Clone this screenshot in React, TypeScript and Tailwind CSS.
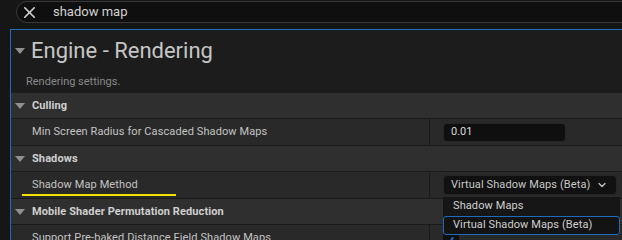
import { ChevronDown, X } from 'lucide-react'

const font = { fontFamily: 'Roboto, "Noto Sans", sans-serif' }

function Caret() {
  return (
    <svg width="10" height="6" viewBox="0 0 10 6" className="shrink-0">
      <path d="M0 0 L10 0 L5 6 Z" fill="#8f8f8f" />
    </svg>
  )
}

function Header({ label }: { label: string }) {
  return (
    <div className="flex h-[26px] items-center gap-[7px] bg-[#2f2f2f] pl-[4px] pt-[1px] border-b border-[#1b1b1b]">
      <Caret />
      <span className="text-[11px] font-bold tracking-[0.1px] text-[#cfcfcf]">{label}</span>
    </div>
  )
}

function Row({ label, children, mark }: { label: string; children?: React.ReactNode; mark?: boolean }) {
  return (
    <div className="flex h-[27px] bg-[#292929] border-b border-[#1b1b1b]">
      <div className="relative flex w-[419px] items-center border-r border-[#1b1b1b] pl-[21px]">
        <span className="whitespace-nowrap text-[11px] tracking-[0.1px] text-[#c4c4c4]">{label}</span>
        {mark && <div className="absolute left-[11px] top-[22px] h-[2px] w-[154px] bg-[#f2e200]" />}
      </div>
      <div className="flex flex-1 items-center pl-[13px]">{children}</div>
    </div>
  )
}

export default function App() {
  return (
    <div className="relative h-[240px] w-[622px] overflow-hidden bg-[#161616]" style={font}>
      <div className="pt-[1px] pl-[16px]">
        <div className="flex h-[22px] w-[700px] items-center rounded-l-full border border-[#383838] bg-[#0f0f0f] pl-[3px]">
          <X size={19} strokeWidth={2} className="text-[#d6d6d6]" />
          <span className="ml-[14px] text-[13px] text-[#d2d2d2]">shadow map</span>
        </div>
      </div>
      <div className="mt-[6px] flex">
        <div className="w-[10px] shrink-0" />
        <div className="flex-1 border-l border-t border-[#1d6cc0] bg-[#1c1c1c]">
          <div className="flex h-[63px] flex-col pl-[4px]">
            <div className="mt-[7px] flex items-center gap-[6px]">
              <Caret />
              <span className="text-[22px] leading-[28px] text-[#c6c6c6]">Engine - Rendering</span>
            </div>
            <div className="mt-[10px] pl-[11px] text-[11px] leading-[14px] text-[#8a8a8a]">Rendering settings.</div>
          </div>
          <Header label="Culling" />
          <Row label="Min Screen Radius for Cascaded Shadow Maps">
            <div className="flex h-[19px] w-[123px] items-center rounded-[4px] border border-[#262626] bg-[#0f0f0f] pl-[7px]">
              <span className="text-[11px] text-[#d8d8d8]">0.01</span>
            </div>
          </Row>
          <Header label="Shadows" />
          <Row label="Shadow Map Method" mark>
            <div className="flex h-[20px] w-[174px] items-center justify-between rounded-[4px] border border-[#262626] bg-[#111111] pl-[7px] pr-[8px]">
              <span className="whitespace-nowrap text-[11px] tracking-[0.1px] text-[#c8c8c8]">Virtual Shadow Maps (Beta)</span>
              <ChevronDown size={12} strokeWidth={2.5} className="text-[#c8c8c8]" />
            </div>
          </Row>
          <Header label="Mobile Shader Permutation Reduction" />
          <Row label="Support Pre-baked Distance Field Shadow Maps">
            <div className="relative h-[16px] w-[16px] rounded-[2px] bg-[#0f0f0f]">
              <div className="absolute left-[8px] top-[7px] h-[4px] w-[2px] rotate-[30deg] bg-[#1d6cc0]" />
            </div>
          </Row>
        </div>
      </div>
      <div className="absolute left-[443px] top-[197px] w-[177px] rounded-b-[3px] bg-[#161616]">
        <div className="flex h-[19px] items-center pl-[10px] text-[11px] tracking-[0.1px] text-[#d0d0d0]">Shadow Maps</div>
        <div className="flex h-[19px] items-center rounded-[3px] border border-[#1d6cc0] bg-[#131313] pl-[9px] text-[11px] tracking-[0.1px] text-[#d0d0d0]">
          Virtual Shadow Maps (Beta)
        </div>
      </div>
    </div>
  )
}
